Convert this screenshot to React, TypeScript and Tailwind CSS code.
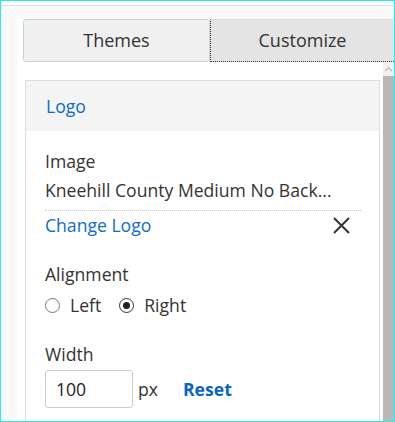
import type { ReactNode } from "react";

const BLUE = "text-[#0f6acb]";

function Radio({ label, checked }: { label: string; checked?: boolean }) {
  return (
    <label className="flex items-center">
      <span
        className={
          checked
            ? "flex h-[15px] w-[15px] items-center justify-center rounded-full border-[1.5px] border-[#333]"
            : "h-[15px] w-[15px] rounded-full border border-[#777]"
        }
      >
        {checked ? <span className="h-[7px] w-[7px] rounded-full bg-[#222]" /> : null}
      </span>
      <span className="ml-[10px]">{label}</span>
    </label>
  );
}

function Field({ label, children, className }: { label: string; children?: ReactNode; className?: string }) {
  return (
    <div className={className}>
      <div className="leading-[24px] text-[#333]">{label}</div>
      {children}
    </div>
  );
}

export default function App() {
  return (
    <div className="flex h-[422px] w-[395px] flex-col overflow-hidden border border-[#22eeee] font-['Open_Sans',sans-serif] text-[17.6px] text-[#333]">
      <div className="h-[5px] shrink-0 border-b border-[#dedede] bg-white" />
      <div className="flex flex-1 flex-col bg-[#f9f9f9] pl-[16px] pt-[13px]">
        <div className="flex flex-1 flex-col bg-white">
          {/* tabs */}
          <div className="flex h-[43px] shrink-0 pl-[6px]">
            <button className="flex w-[187px] items-center justify-center rounded-[3px] border border-[#cfcfcf] bg-[#f0f0f0] text-[18px] text-[#333]">
              Themes
            </button>
            <button className="flex flex-1 items-center justify-center border-b border-l border-dotted border-b-[#333] border-l-[#333] border-t border-t-[#d5d5d5] bg-[#e4e4e4] text-[18px] text-[#333]">
              Customize
            </button>
          </div>

          <div className="flex flex-1">
            <div className="flex-1 pl-[8px] pr-[3px] pt-[18px]">
              <div className="border border-[#ddd]">
                <div className={`flex h-[50px] items-center bg-[#f4f4f4] px-[20px] leading-[24px] ${BLUE}`}>Logo</div>
                <div className="pb-[20px] pl-[19px] pr-[18px] pt-[18px]">
                  <Field label="Image">
                    <div className="mt-[5px] border-b border-dotted border-[#c8c8c8] pb-[8px] leading-[24px]">
                      Kneehill County Medium No Back...
                    </div>
                    <div className="mt-[2px] flex items-center justify-between leading-[24px]">
                      <a className={BLUE}>Change Logo</a>
                      <span className="pr-[11px]">
                        <svg width="17" height="17" viewBox="0 0 17 17" fill="none" stroke="#333" strokeWidth="2">
                          <path d="M1 1 L16 16 M16 1 L1 16" />
                        </svg>
                      </span>
                    </div>
                  </Field>

                  <Field label="Alignment" className="mt-[25px]">
                    <div className="mt-[7px] flex h-[24px] items-center gap-[18px] leading-[24px]">
                      <Radio label="Left" />
                      <Radio label="Right" checked />
                    </div>
                  </Field>

                  <Field label="Width" className="mt-[25px]">
                    <div className="mt-[4px] flex items-center">
                      <div className="flex h-[38px] w-[88px] items-center rounded-[3px] border border-[#ccc] pl-[10px] text-[#222]">
                        100
                      </div>
                      <span className="ml-[5px]">px</span>
                      <a className="ml-[25px] font-bold text-[#0a64c4]">Reset</a>
                    </div>
                  </Field>
                </div>
              </div>
            </div>

            {/* scrollbar */}
            <div className="flex w-[11px] flex-col bg-[#f1f1f1]">
              <div className="flex h-[14px] items-center justify-center">
                <svg width="9" height="6" viewBox="0 0 9 6" fill="none" stroke="#bbb" strokeWidth="1.2">
                  <path d="M1 5 L4.5 1.5 L8 5" />
                </svg>
              </div>
              <div className="flex-1 bg-[#b8b8b8]" />
            </div>
          </div>
        </div>
      </div>
    </div>
  );
}
